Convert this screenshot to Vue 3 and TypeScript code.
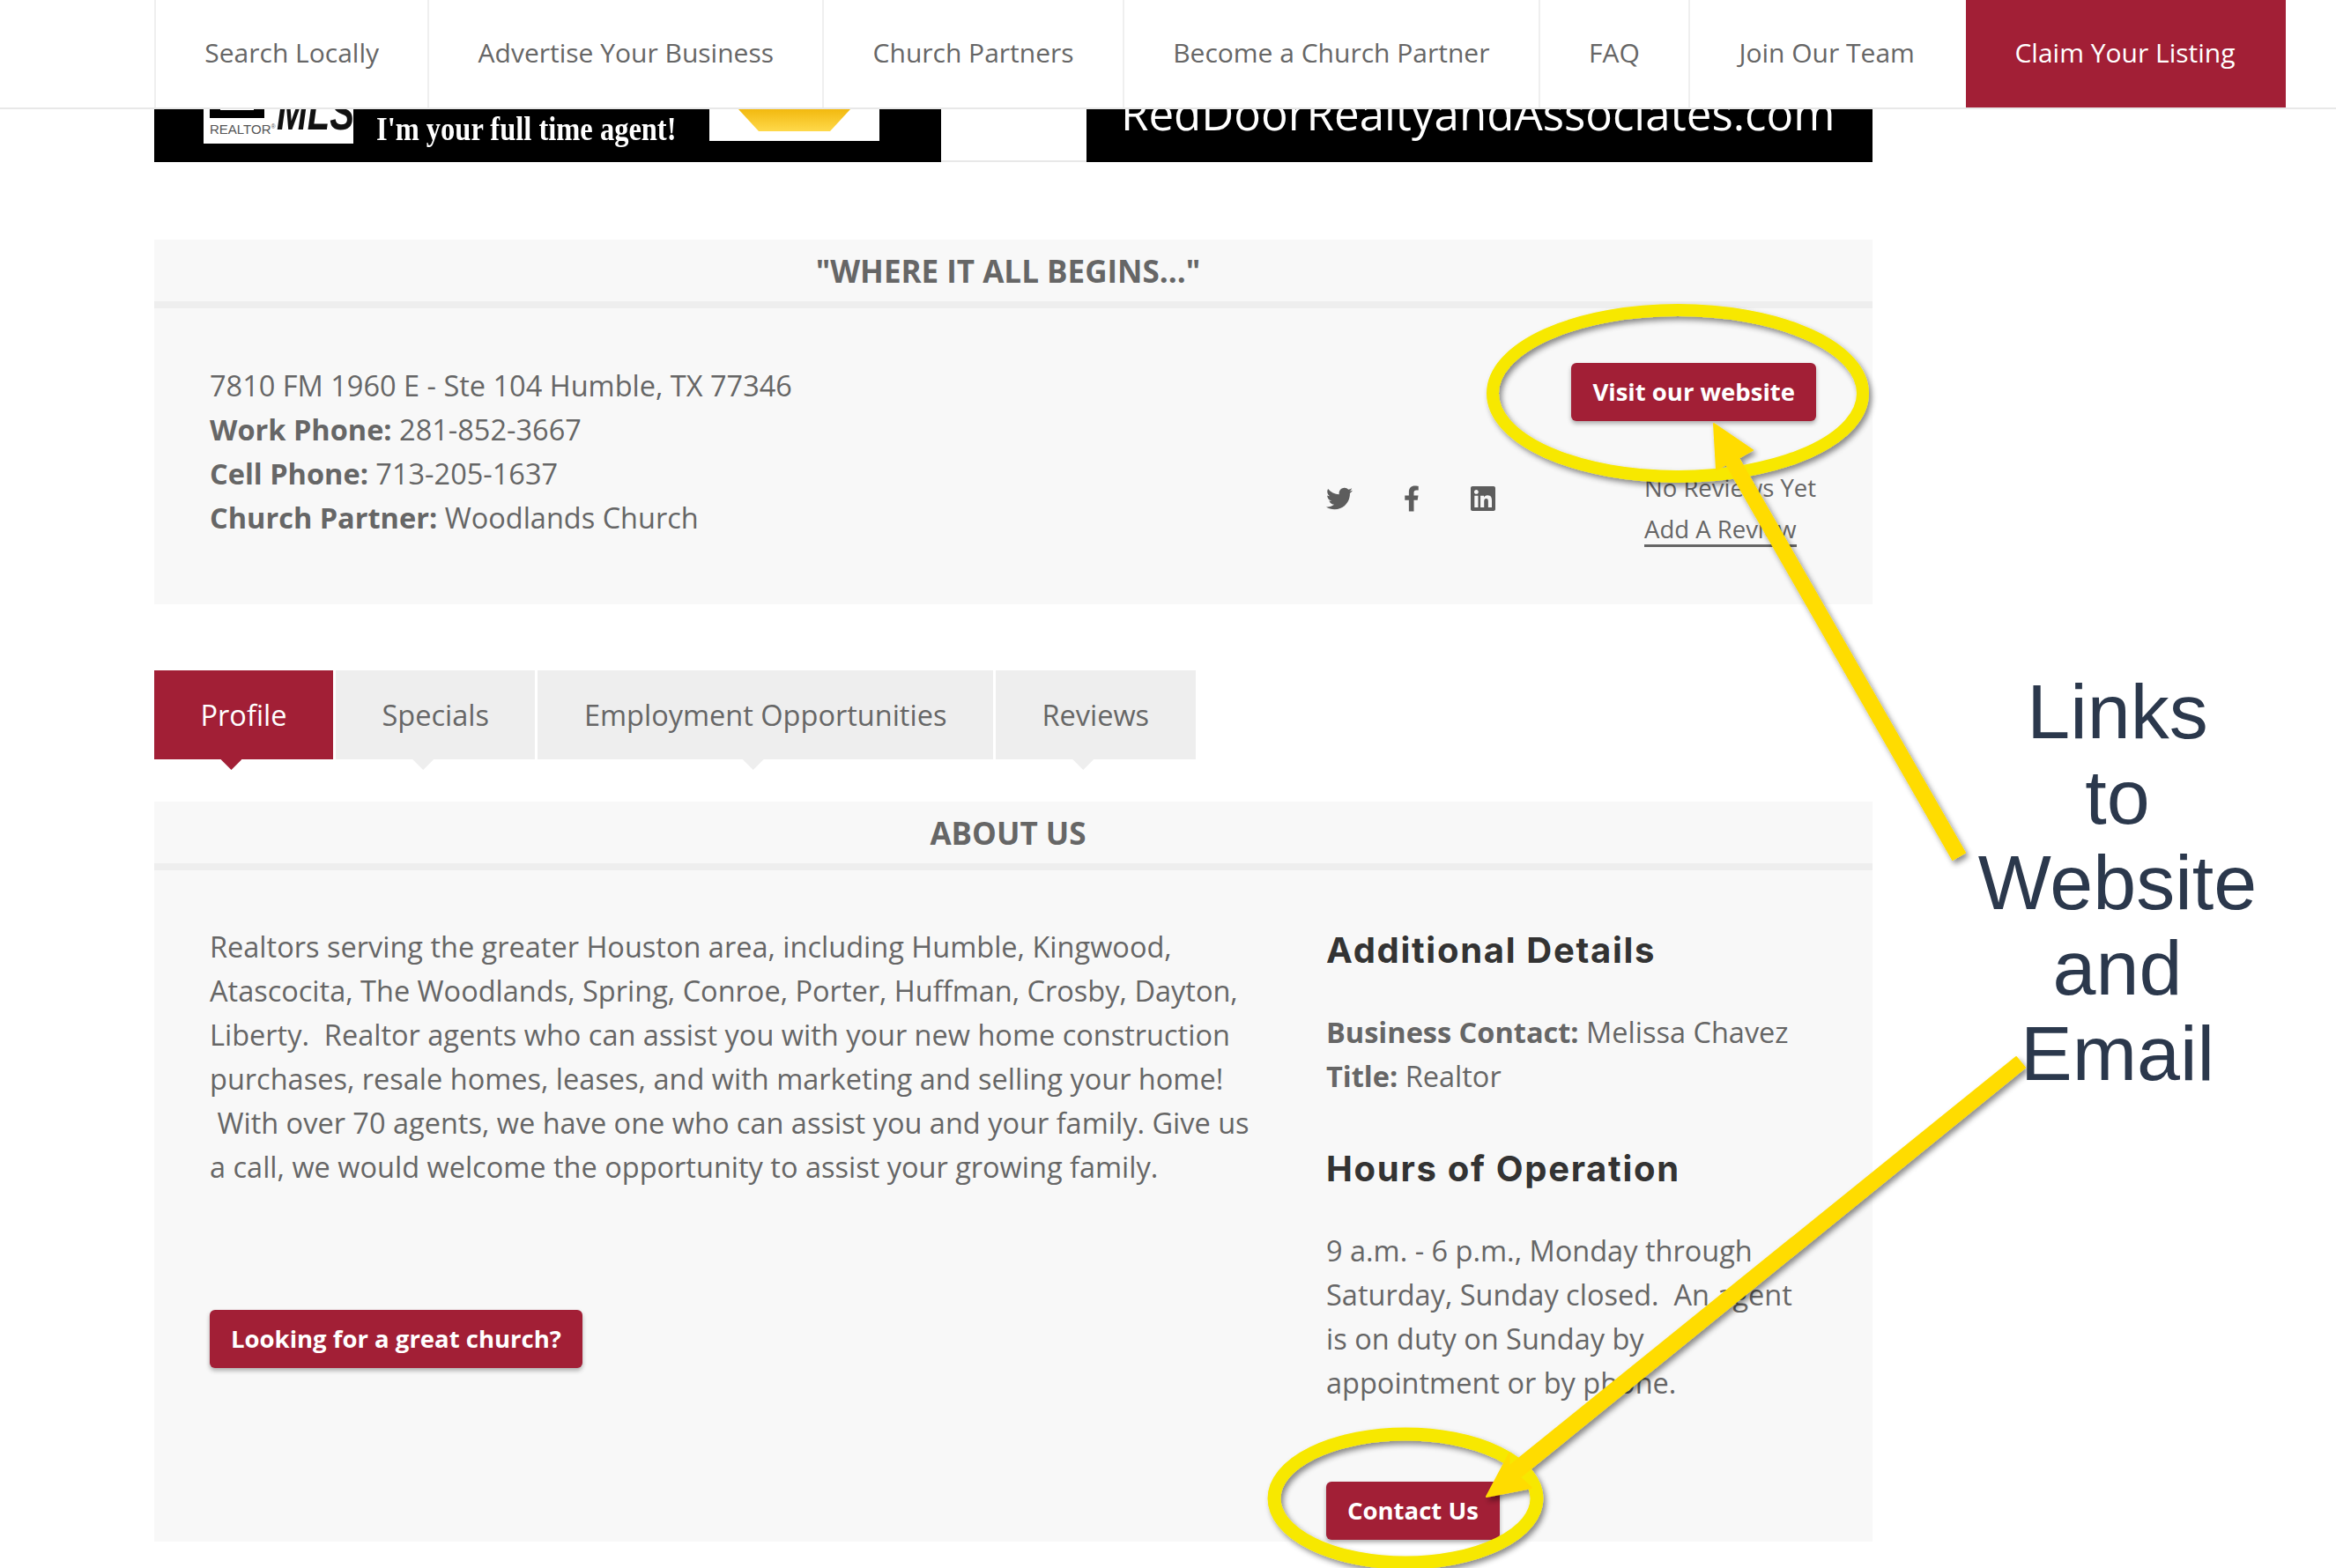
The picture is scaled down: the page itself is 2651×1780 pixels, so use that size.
<script setup lang="ts">
const navItems = [
  'Search Locally',
  'Advertise Your Business',
  'Church Partners',
  'Become a Church Partner',
  'FAQ',
  'Join Our Team',
]

const tabs = ['Profile', 'Specials', 'Employment Opportunities', 'Reviews']
</script>

<template>
  <div class="page">
    <header class="site-nav">
      <a v-for="item in navItems" :key="item" class="nav-link">{{ item }}</a>
      <a class="nav-link nav-claim">Claim Your Listing</a>
    </header>

    <main class="content">
      <div class="banner">
        <div class="banner-left">
          <div class="realtor-box">
            <div class="realtor-logo">
              <span class="realtor-mark"></span>
              <span class="realtor-word">REALTOR<sup>®</sup></span>
            </div>
            <span class="mls">MLS</span>
          </div>
          <div class="tagline">
            <span>Helping you buy anything,</span>
            <span>I'm your full time agent!</span>
          </div>
          <div class="gold-box">
            <svg width="193" height="40" viewBox="0 0 193 40">
              <defs>
                <linearGradient id="gold" x1="0" y1="0" x2="0" y2="1">
                  <stop offset="0" stop-color="#f2b90f" />
                  <stop offset="1" stop-color="#ffd94a" />
                </linearGradient>
              </defs>
              <polygon points="33,0 160,0 137,25 56,25" fill="url(#gold)" />
            </svg>
          </div>
        </div>
        <div class="banner-gap"></div>
        <div class="banner-right">RedDoorRealtyandAssociates.com</div>
      </div>

      <section class="card listing-card">
        <h2 class="card-title">"WHERE IT ALL BEGINS..."</h2>
        <div class="listing-body">
          <div class="listing-info">
            <p>7810 FM 1960 E - Ste 104 Humble, TX 77346</p>
            <p><strong>Work Phone:</strong> 281-852-3667</p>
            <p><strong>Cell Phone:</strong> 713-205-1637</p>
            <p><strong>Church Partner:</strong> Woodlands Church</p>
          </div>
          <div class="listing-side">
            <a class="btn">Visit our website</a>
            <div class="side-row">
              <div class="social">
                <svg class="icon-twitter" viewBox="0 0 512 512">
                  <path d="M459.37 151.716c.325 4.548.325 9.097.325 13.645 0 138.72-105.583 298.558-298.558 298.558-59.452 0-114.68-17.219-161.137-47.106 8.447.974 16.568 1.299 25.34 1.299 49.055 0 94.213-16.568 130.274-44.832-46.132-.975-84.792-31.188-98.112-72.772 6.498.974 12.995 1.624 19.818 1.624 9.421 0 18.843-1.3 27.614-3.573-48.081-9.747-84.143-51.98-84.143-102.985v-1.299c13.969 7.797 30.214 12.67 47.431 13.319-28.264-18.843-46.781-51.005-46.781-87.391 0-19.492 5.197-37.36 14.294-52.954 51.655 63.675 129.3 105.258 216.365 109.807-1.624-7.797-2.599-15.918-2.599-24.04 0-57.828 46.782-104.934 104.934-104.934 30.213 0 57.502 12.67 76.67 33.137 23.715-4.548 46.456-13.32 66.599-25.34-7.798 24.366-24.366 44.833-46.132 57.827 21.117-2.273 41.584-8.122 60.426-16.243-14.292 20.791-32.161 39.308-52.628 54.253z" />
                </svg>
                <svg class="icon-facebook" viewBox="0 0 320 512">
                  <path d="M279.14 288l14.22-92.66h-88.91v-60.13c0-25.35 12.42-50.06 52.24-50.06h40.42V6.26S260.43 0 225.36 0c-73.22 0-121.08 44.38-121.08 124.72v70.62H22.89V288h81.39v224h100.17V288z" />
                </svg>
                <svg class="icon-linkedin" viewBox="0 0 448 448">
                  <path d="M416 0H31.9C14.3 0 0 14.5 0 32.3v383.4C0 433.5 14.3 448 31.9 448H416c17.6 0 32-14.5 32-32.3V32.3C448 14.5 433.6 0 416 0zM135.4 384H69V170.2h66.5V384zm-33.2-243c-21.3 0-38.5-17.3-38.5-38.5S80.9 64 102.2 64c21.2 0 38.5 17.3 38.5 38.5 0 21.3-17.2 38.5-38.5 38.5zm282.1 243h-66.4V280c0-24.8-.5-56.7-34.5-56.7-34.6 0-39.9 27-39.9 54.9V384h-66.4V170.2h63.7v29.2h.9c8.9-16.8 30.6-34.5 62.9-34.5 67.2 0 79.7 44.3 79.7 101.9V384z" />
                </svg>
              </div>
              <div class="reviews-info">
                <span>No Reviews Yet</span>
                <a>Add A Review</a>
              </div>
            </div>
          </div>
        </div>
      </section>

      <nav class="tabs">
        <a
          v-for="(tab, i) in tabs"
          :key="tab"
          class="tab"
          :class="{ active: i === 0 }"
        >{{ tab }}</a>
      </nav>

      <section class="card about-card">
        <h2 class="card-title">ABOUT US</h2>
        <div class="about-body">
          <div class="about-main">
            <p>
              Realtors serving the greater Houston area, including Humble, Kingwood, Atascocita, The Woodlands, Spring, Conroe, Porter, Huffman, Crosby, Dayton, Liberty.&nbsp; Realtor agents who can assist you with your new home construction purchases, resale homes, leases, and with marketing and selling your home!<br />&nbsp;With over 70 agents, we have one who can assist you and your family. Give us a call, we would welcome the opportunity to assist your growing family.
            </p>
            <a class="btn btn-church">Looking for a great church?</a>
          </div>
          <aside class="about-side">
            <h3>Additional Details</h3>
            <p class="details">
              <strong>Business Contact:</strong> Melissa Chavez<br />
              <strong>Title:</strong> Realtor
            </p>
            <h3 class="hours-title">Hours of Operation</h3>
            <p class="hours">
              9 a.m. - 6 p.m., Monday through Saturday, Sunday closed.&nbsp; An agent is on duty on Sunday by appointment or by phone.
            </p>
            <a class="btn btn-contact">Contact Us</a>
          </aside>
        </div>
      </section>
    </main>

    <!-- callout drawn over the screenshot -->
    <svg class="callouts" width="2651" height="1780" viewBox="0 0 2651 1780">
      <defs>
        <filter id="soft" x="-20%" y="-20%" width="140%" height="140%">
          <feDropShadow dx="3" dy="4" stdDeviation="3" flood-color="#000" flood-opacity="0.45" />
        </filter>
      </defs>
      <g filter="url(#soft)">
        <ellipse cx="1904" cy="446.5" rx="210" ry="94.5" fill="none" stroke="#f7e800" stroke-width="14" />
        <ellipse cx="1595" cy="1701" rx="149" ry="73" fill="none" stroke="#f7e800" stroke-width="15" />
        <polygon points="1945,481 1989,511 1973,520 2230,968 2216,976 1959,527 1948,533" fill="#ffdc00" stroke="#ffdc00" stroke-width="2" stroke-linejoin="round" />
        <polygon points="1687,1699 1738,1689 1725,1677 2298,1212 2288,1200 1712,1665 1713,1650" fill="#ffdc00" stroke="#ffdc00" stroke-width="2" stroke-linejoin="round" />
      </g>
    </svg>
    <div class="callout-text">Links<br />to<br />Website<br />and<br />Email</div>
  </div>
</template>

<style scoped>
.page {
  position: relative;
  width: 2651px;
  height: 1780px;
  overflow: hidden;
  background: #fff;
  font-family: 'Open Sans', sans-serif;
  color: #666;
}

.site-nav {
  position: relative;
  z-index: 2;
  display: flex;
  height: 122px;
  padding-left: 175px;
  background: #fff;
  border-bottom: 2px solid #e8e8e8;
}

.nav-link {
  display: flex;
  align-items: center;
  padding: 0 55.3px 3px;
  border-left: 2px solid #efefef;
  font-size: 30px;
  color: #666;
}

.nav-claim {
  margin-left: 3px;
  padding-right: 57px;
  background: #a21f36;
  color: #fff;
  border-left: none;
}

.content {
  width: 1950px;
  margin-left: 175px;
}

.banner {
  display: flex;
  height: 60px;
  overflow: hidden;
}

.banner-left {
  display: flex;
  align-items: flex-end;
  flex-shrink: 0;
  width: 893px;
  padding: 0 0 22px 56px;
  background: #000;
  box-sizing: border-box;
}

.realtor-box {
  display: flex;
  align-items: flex-end;
  flex-shrink: 0;
  width: 170px;
  height: 80px;
  padding: 0 0 8px 7px;
  background: #fff;
  box-sizing: border-box;
  margin-bottom: -1px;
}

.realtor-logo {
  display: flex;
  flex-direction: column;
  flex-shrink: 0;
  width: 76px;
}

.realtor-mark {
  position: relative;
  display: block;
  width: 62px;
  height: 52px;
  background: #000;
}

.realtor-mark::before {
  content: '';
  position: absolute;
  left: 12px;
  bottom: 9px;
  width: 38px;
  height: 30px;
  background: #fff;
}

.realtor-word {
  font-family: 'Liberation Sans', sans-serif;
  font-size: 15px;
  line-height: 17px;
  color: #555;
  margin-top: 4px;
  white-space: nowrap;
}

.realtor-word sup {
  font-size: 7px;
  line-height: 0;
}

.mls {
  font-family: 'Liberation Sans', sans-serif;
  font-size: 58px;
  line-height: 48px;
  font-weight: 700;
  font-style: italic;
  color: #111;
  margin: 0 0 4px 0;
  transform: scaleX(0.72);
  transform-origin: left bottom;
}

.tagline {
  display: flex;
  flex-direction: column;
  flex-shrink: 0;
  width: 341px;
  margin: 0 0 -7px 26px;
  font-family: 'Liberation Serif', serif;
  font-size: 38px;
  line-height: 46px;
  font-weight: 700;
  color: #fff;
  white-space: nowrap;
}

.tagline span {
  transform: scaleX(0.855);
  transform-origin: left center;
}

.gold-box {
  flex-shrink: 0;
  width: 193px;
  height: 60px;
  margin: 0 0 2px 37px;
  background: #fff;
}

.gold-box svg {
  display: block;
  margin-top: 24px;
}

.banner-gap {
  flex-shrink: 0;
  width: 165px;
  background: #fff;
  border-bottom: 2px solid #e8e8e8;
  box-sizing: border-box;
}

.banner-right {
  flex: 1;
  min-width: 0;
  display: flex;
  align-items: flex-end;
  padding: 0 0 28px 39px;
  background: #000;
  color: #fff;
  font-size: 51px;
  line-height: 56px;
  white-space: nowrap;
}

.card {
  background: #f8f8f8;
}

.card-title {
  margin: 0;
  height: 70px;
  padding-right: 12px;
  line-height: 71px;
  border-bottom: 8px solid #eee;
  text-align: center;
  font-size: 35px;
  font-weight: 700;
  color: #666;
}

.listing-card {
  margin-top: 88px;
}

.listing-body {
  display: flex;
  justify-content: space-between;
  height: 336px;
  padding: 62px 64px 0 63px;
  box-sizing: border-box;
  font-size: 32.5px;
  line-height: 50px;
}

.listing-info {
  padding-top: 1px;
}

.listing-info p {
  margin: 0;
}

.listing-side {
  display: flex;
  flex-direction: column;
  align-items: flex-end;
  width: 556px;
}

.btn {
  display: inline-block;
  height: 66px;
  padding: 0 24px;
  line-height: 66px;
  border-radius: 6px;
  background: #a21f36;
  color: #fff;
  font-size: 27.5px;
  font-weight: 700;
  box-shadow: 0 3px 5px rgba(0, 0, 0, 0.3);
  white-space: nowrap;
}

.side-row {
  display: flex;
  align-items: center;
  justify-content: space-between;
  width: 100%;
  margin-top: 52px;
}

.social {
  display: flex;
  align-items: center;
  gap: 58px;
  margin-bottom: 20px;
  fill: #5d5d5d;
}

.icon-twitter {
  width: 30px;
  height: 30px;
}

.icon-facebook {
  width: 18px;
  height: 30px;
}

.icon-linkedin {
  width: 28px;
  height: 28px;
}

.reviews-info {
  display: flex;
  flex-direction: column;
  align-items: flex-start;
  width: 195px;
  font-size: 27.5px;
  line-height: 47px;
  white-space: nowrap;
}

.reviews-info a {
  line-height: 34px;
  margin-top: 7px;
  border-bottom: 3px solid #666;
}

.tabs {
  display: flex;
  gap: 3px;
  margin-top: 75px;
}

.tab {
  position: relative;
  height: 101px;
  padding: 0 52.5px;
  line-height: 101px;
  background: #eee;
  font-size: 32.5px;
  color: #666;
}

.tab::after {
  content: '';
  position: absolute;
  left: 50%;
  top: 100%;
  width: 24px;
  height: 12px;
  margin-left: -26px;
  background: #eee;
  clip-path: polygon(0 0, 100% 0, 50% 100%);
}

.tab.active {
  background: #a21f36;
  color: #fff;
}

.tab.active::after {
  background: #a21f36;
}

.about-card {
  margin-top: 48px;
}

.about-body {
  display: flex;
  justify-content: space-between;
  height: 762px;
  padding: 62px 64px 0 63px;
  box-sizing: border-box;
  font-size: 32.5px;
  line-height: 50px;
}

.about-main {
  width: 1190px;
}

.about-main p {
  margin: 0;
}

.btn-church {
  margin-top: 137px;
}

.about-side {
  width: 556px;
  padding-top: 4px;
}

.about-side h3 {
  margin: 0;
  font-family: Inter, 'Open Sans', sans-serif;
  font-size: 40px;
  line-height: 50px;
  font-weight: 700;
  letter-spacing: 1.7px;
  color: #333;
}

.about-side p {
  margin: 0;
}

.about-side .details {
  margin-top: 43px;
}

.about-side .hours-title {
  margin-top: 55px;
}

.about-side .hours {
  max-width: 540px;
  margin-top: 43px;
}

.btn-contact {
  margin-top: 87px;
}

.callouts {
  position: absolute;
  left: 0;
  top: 0;
  z-index: 3;
  pointer-events: none;
}

.callout-text {
  position: absolute;
  left: 2203px;
  top: 759px;
  z-index: 3;
  width: 400px;
  text-align: center;
  font-family: 'Liberation Sans', sans-serif;
  font-size: 88px;
  line-height: 97px;
  color: #2b384c;
}
</style>

<style>
html,
body {
  margin: 0;
  overflow: hidden;
}
</style>
